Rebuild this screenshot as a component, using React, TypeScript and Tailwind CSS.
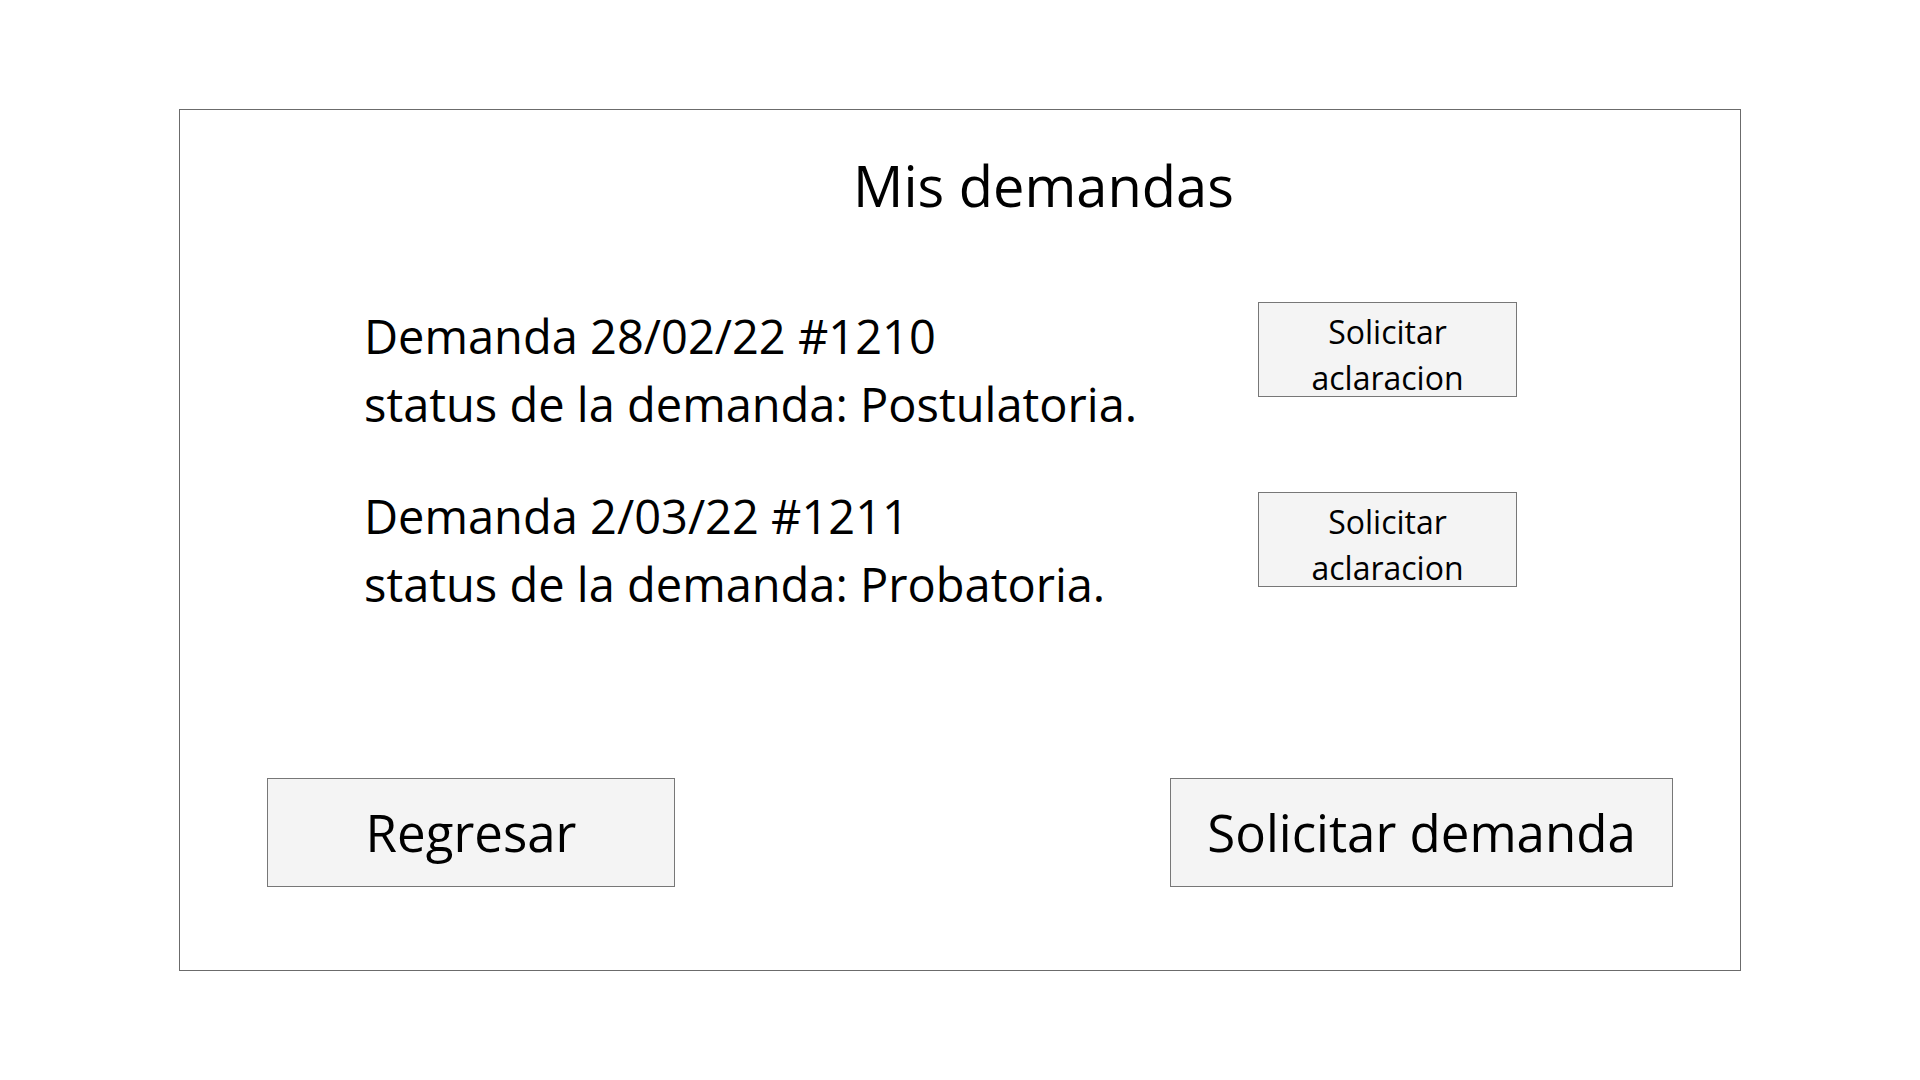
import React from "react";

const demandas = [
  { titulo: "Demanda 28/02/22 #1210", status: "Postulatoria." },
  { titulo: "Demanda 2/03/22 #1211", status: "Probatoria." },
];

const App: React.FC = () => {
  return (
    <div className="min-h-screen bg-white pt-[109px] font-['Open_Sans',sans-serif] text-black">
      <div className="mx-auto w-[1562px] h-[862px] border border-[#6b6b6b] flex flex-col">
        {/* Titulo */}
        <h1 className="mt-[47px] pl-[167px] text-center text-[56px] leading-none font-normal">
          Mis demandas
        </h1>

        {/* Lista de demandas */}
        <div className="mt-[89px] flex flex-col gap-[44px] pl-[184px]">
          {demandas.map((d, i) => (
            <div key={d.titulo} className="flex items-start">
              <div className="w-[894px] text-[47px] leading-[68px]">
                <p>{d.titulo}</p>
                <p>status de la demanda: {d.status}</p>
              </div>
              <button
                className={
                  "w-[259px] h-[95px] border border-[#777777] bg-[#f4f4f4] flex flex-col items-center pt-[6px] text-[32px] leading-[46px] " +
                  (i === 0 ? "mt-0" : "mt-[10px]")
                }
              >
                <span>Solicitar</span>
                <span>aclaracion</span>
              </button>
            </div>
          ))}
        </div>

        {/* Acciones */}
        <div className="mt-auto mb-[83px] flex justify-between pl-[87px] pr-[67px]">
          <button className="w-[408px] h-[109px] border border-[#777777] bg-[#f4f4f4] flex items-center justify-center text-[51px] leading-none">
            Regresar
          </button>
          <button className="w-[503px] h-[109px] border border-[#777777] bg-[#f4f4f4] flex items-center justify-center text-[51px] leading-none">
            Solicitar demanda
          </button>
        </div>
      </div>
    </div>
  );
};

export default App;
